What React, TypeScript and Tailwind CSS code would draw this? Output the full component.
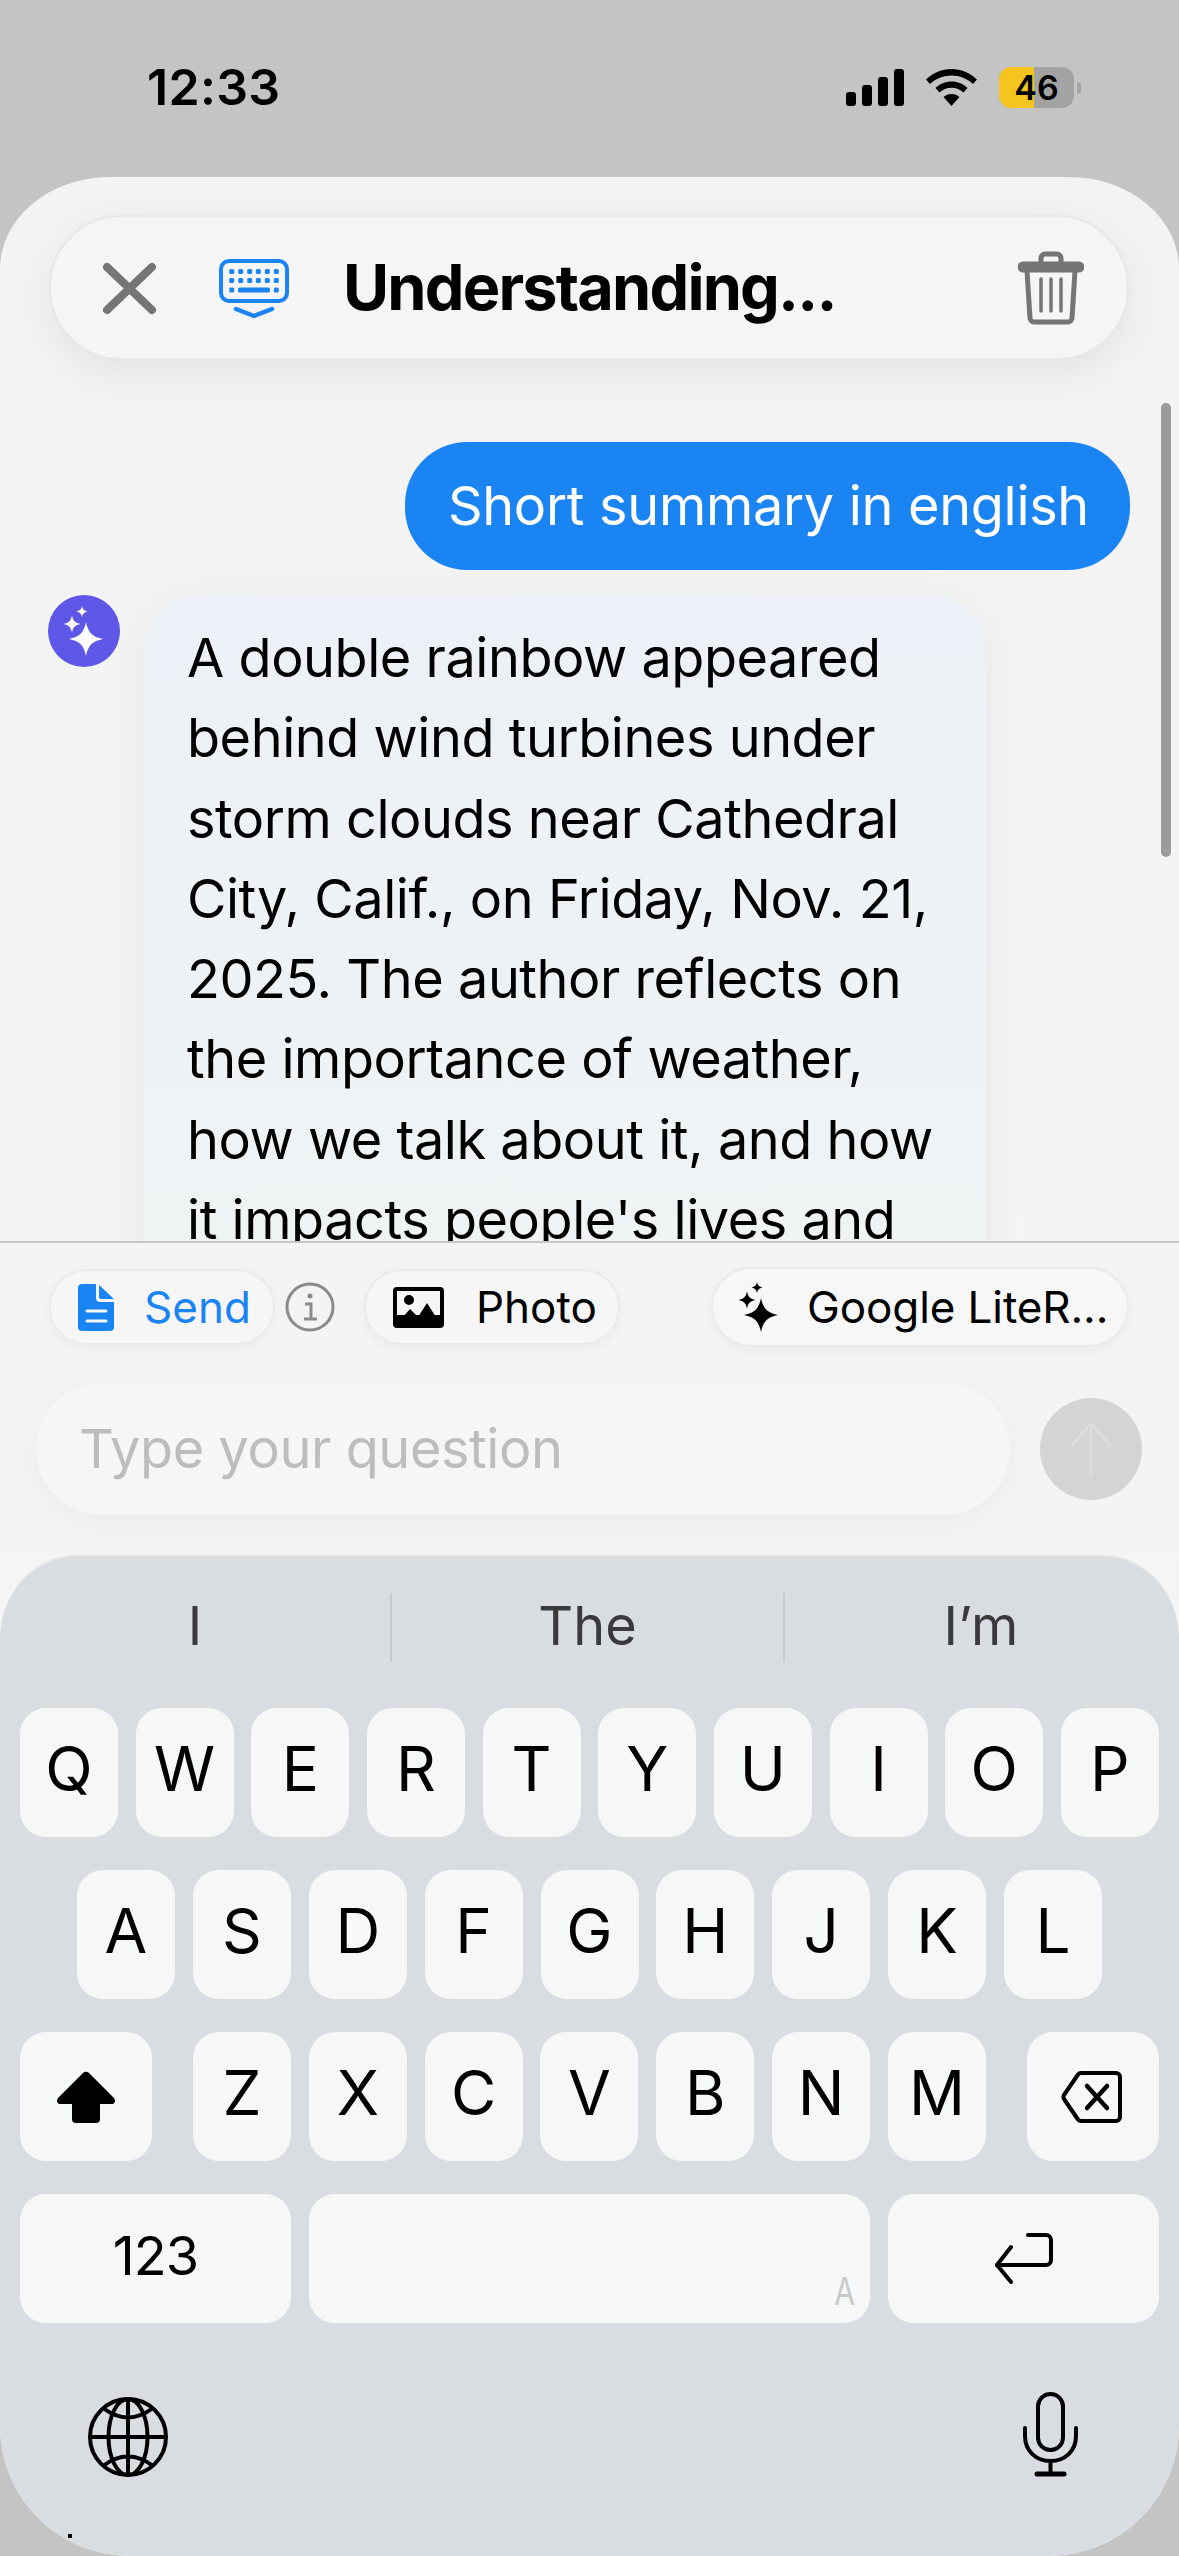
import React from 'react';

const SF = "font-['Inter','Liberation_Sans',sans-serif]";

const bodyLines = [
  'A double rainbow appeared',
  'behind wind turbines under',
  'storm clouds near Cathedral',
  'City, Calif., on Friday, Nov. 21,',
  '2025. The author reflects on',
  'the importance of weather,',
  'how we talk about it, and how',
  "it impacts people's lives and",
];

// four pointed star with concave sides
function star(x: number, y: number, r: number) {
  const a = r * 0.12;
  const b = r * 0.38;
  return `M${x} ${y - r}C${x + a} ${y - b} ${x + b} ${y - a} ${x + r} ${y}C${x + b} ${y + a} ${x + a} ${y + b} ${x} ${y + r}C${x - a} ${y + b} ${x - b} ${y + a} ${x - r} ${y}C${x - b} ${y - a} ${x - a} ${y - b} ${x} ${y - r}z`;
}

function Sparkles({ className, fill }: { className?: string; fill: string }) {
  return (
    <svg viewBox="0 0 42 50" className={className} fill={fill}>
      <path d={star(23, 33, 17)} />
      <path d={star(9, 18, 8.5)} />
      <path d={star(19, 5.5, 5.5)} />
    </svg>
  );
}

function Key({ label, className = 'w-[98px]', children }: { label?: string; className?: string; children?: React.ReactNode }) {
  return (
    <div className={`h-[129px] ${className} shrink-0 rounded-[26px] bg-[#f6f8f7] flex items-center justify-center text-black relative`}>
      {label && <span className="text-[62px] leading-none pb-[8px]">{label}</span>}
      {children}
    </div>
  );
}

function StatusBar() {
  return (
    <div className="h-[177px] shrink-0 flex items-start justify-between pl-[147px] pr-[98px] pt-[67px]">
      <span className="text-[50px] leading-[40px] font-semibold text-black tracking-[0.3px]">12:33</span>
      <div className="flex items-start gap-[22px]">
        <svg viewBox="0 0 58 37" className="w-[58px] h-[37px] mt-[2px]" fill="#000">
          <rect x="0" y="23" width="10" height="14" rx="3" />
          <rect x="16" y="16" width="10" height="21" rx="3" />
          <rect x="32" y="8" width="10" height="29" rx="3" />
          <rect x="48" y="0" width="10" height="37" rx="3" />
        </svg>
        <svg viewBox="0 0 51 37" className="w-[51px] h-[37px] mt-[2px]" fill="#000">
          <path d="M25.500 0C35 0 44 4 51 10.500l-4 4.500C41 9.500 33.500 6.500 25.500 6.500S10 9.500 4 15L0 10.500C7 4 16 0 25.500 0z" />
          <path d="M25.500 12.500c6 0 11.800 2.300 16 6.500l-4 4.500c-3.200-3-7.500-4.800-12-4.800s-8.800 1.800-12 4.800l-4-4.500c4.200-4.200 10-6.500 16-6.500z" />
          <path d="M25.500 25c3 0 5.800 1 8 3L25.500 37l-8-9c2.200-2 5-3 8-3z" />
        </svg>
        <div className="flex items-center gap-[3px]">
          <div className="relative w-[75px] h-[41px] rounded-[12px] overflow-hidden bg-[#a3a3a3] flex items-center justify-center">
            <div className="absolute left-0 top-0 bottom-0 w-[35px] bg-[#f5c51f]" />
            <span className="relative text-[34px] leading-none font-semibold text-black">46</span>
          </div>
          <div className="w-[4px] h-[12px] rounded-r-full bg-[#a3a3a3]" />
        </div>
      </div>
    </div>
  );
}

function Header() {
  return (
    <div className="ml-[49px] mr-[50px] mt-[38px] h-[145px] shrink-0 rounded-[72px] bg-[#f5f5f5] border-2 border-[#e7e7e7] shadow-[0_12px_40px_rgba(0,0,0,0.07)] flex items-center">
      <svg viewBox="0 0 55 53" className="ml-[51px] w-[55px] h-[53px] mt-[2px]" stroke="#757575" strokeWidth="8" strokeLinecap="round" fill="none">
        <path d="M5 5l45 43M50 5L5 48" />
      </svg>
      <svg viewBox="0 0 70 60" className="ml-[62px] w-[70px] h-[60px] mt-[2px]">
        <rect x="2" y="2" width="66" height="40" rx="8" fill="none" stroke="#1a84f2" strokeWidth="4" />
        <g fill="#1a84f2">
          {[10.2, 19.2, 28.2, 36.8, 45.8, 54.8].map((x) => (
            <React.Fragment key={x}>
              <rect x={x} y="10" width="5" height="5" rx="1.500" />
              <rect x={x} y="19" width="5" height="5" rx="1.500" />
            </React.Fragment>
          ))}
          <rect x="10.200" y="28.500" width="5" height="5" rx="1.500" />
          <rect x="19" y="28.500" width="32" height="5" rx="1.500" />
          <rect x="54.800" y="28.500" width="5" height="5" rx="1.500" />
        </g>
        <path d="M17 50l18 7 18-7" fill="none" stroke="#1a84f2" strokeWidth="4.500" strokeLinecap="round" strokeLinejoin="round" />
      </svg>
      <span className="ml-[54px] text-[63px] leading-none font-bold text-black whitespace-nowrap tracking-[-1.8px]">Understanding...</span>
      <svg viewBox="0 0 66 74" className="ml-auto mr-[43px] w-[66px] h-[74px]" fill="none" stroke="#757575" strokeWidth="5">
        <path d="M23 11V7a4 4 0 0 1 4-4h12a4 4 0 0 1 4 4v4" />
        <rect x="2" y="13" width="62" height="6" rx="3" fill="#757575" />
        <path d="M9 20l3 47a4 4 0 0 0 4 4h34a4 4 0 0 0 4-4l3-47" />
        <path d="M23 28v32M33 28v32M43 28v32" strokeLinecap="round" strokeWidth="3.500" />
      </svg>
    </div>
  );
}

function Chat() {
  return (
    <div className="relative h-[1064px] shrink-0 overflow-hidden flex flex-col">
      <Header />
      <div className="self-end shrink-0 mr-[49px] mt-[82px] h-[128px] rounded-[62px] bg-[#1a84f2] flex items-center pl-[43px] pr-[41px] text-[54px] tracking-[-0.3px] leading-none text-white whitespace-nowrap">
        Short summary in english
      </div>
      <div className="flex items-start shrink-0 gap-[23px] ml-[48px] mt-[25px]">
        <div className="w-[72px] h-[72px] shrink-0 rounded-full bg-[#5e57e8] flex items-center justify-center">
          <Sparkles className="w-[42px] h-[50px]" fill="#ffffff" />
        </div>
        <div className="w-[844px] h-[800px] shrink-0 rounded-t-[56px] bg-linear-to-b from-[#edf0f6] to-[#f1f4f4] border border-[#e8eff2] shadow-[0_8px_44px_rgba(0,0,0,0.06)] pl-[43px] pt-[22px]">
          {bodyLines.map((line) => (
            <div key={line} className="h-[80.3px] text-[54px] tracking-[-0.45px] leading-[80px] text-black whitespace-nowrap">{line}</div>
          ))}
        </div>
      </div>
      <div className="absolute left-[1161px] top-[226px] w-[10px] h-[454px] rounded-full bg-[#9b9b9b]" />
    </div>
  );
}

function Panel() {
  return (
    <div className="relative h-[314px] shrink-0 border-t-2 border-[#c6c6c6] bg-[#f4f4f4]">
      <div className="flex items-center pl-[49px] pr-[50px] pt-[24px] h-[104px]">
        <div className="h-[76px] w-[226px] rounded-[38px] bg-[#f6f6f6] border-2 border-[#ebebeb] shadow-[0_4px_14px_rgba(0,0,0,0.04)] flex items-center pl-[27px] gap-[30px]">
          <svg viewBox="0 0 36 47" className="w-[36px] h-[47px]">
            <path d="M4 0h14v14a4 4 0 0 0 4 4h14v25a4 4 0 0 1-4 4H4a4 4 0 0 1-4-4V4a4 4 0 0 1 4-4z" fill="#1a84f2" />
            <path d="M21 1l15 14H23a2 2 0 0 1-2-2z" fill="#1a84f2" />
            <path d="M9 27h19M9 37h19" stroke="#f6f6f6" strokeWidth="3" strokeLinecap="round" />
          </svg>
          <span className="text-[44px] leading-none text-[#1a84f2]">Send</span>
        </div>
        <svg viewBox="0 0 50 50" className="ml-[10px] w-[50px] h-[50px]" fill="none" stroke="#8a8a8a">
          <circle cx="25" cy="25" r="23" strokeWidth="3" />
          <circle cx="25" cy="14" r="2.500" fill="#8a8a8a" stroke="none" />
          <path d="M20 22h6v14M19 37h13" strokeWidth="3" />
        </svg>
        <div className="ml-[29px] h-[76px] w-[256px] rounded-[38px] bg-[#f6f6f6] border-2 border-[#ebebeb] shadow-[0_4px_14px_rgba(0,0,0,0.04)] flex items-center pl-[27px] gap-[32px]">
          <svg viewBox="0 0 51 41" className="w-[51px] h-[41px]">
            <rect x="0" y="0" width="51" height="41" rx="4" fill="#000" />
            <rect x="4" y="4" width="43" height="24" fill="#f6f6f6" />
            <circle cx="16" cy="13" r="5" fill="#000" />
            <path d="M3 38l14-16 8 8 9-14 14 22z" fill="#000" />
          </svg>
          <span className="text-[44px] leading-none text-black">Photo</span>
        </div>
        <div className="ml-auto h-[80px] w-[418px] rounded-[40px] bg-[#f7f7f7] border-2 border-[#ebebeb] shadow-[0_4px_14px_rgba(0,0,0,0.04)] flex items-center pl-[25px] gap-[27px]">
          <Sparkles className="w-[42px] h-[50px]" fill="#000000" />
          <span className="text-[44px] leading-none text-black whitespace-nowrap tracking-[-0.1px]">Google LiteR...</span>
        </div>
      </div>
      <div className="flex items-center pl-[36px] pt-[36px]">
        <div className="w-[974px] h-[132px] rounded-[66px] bg-[#f6f6f6] shadow-[0_8px_30px_rgba(0,0,0,0.04)] flex items-center pl-[43px] text-[54px] tracking-[-0.4px] leading-none text-[#bdbdbd]">
          Type your question
        </div>
        <div className="ml-[30px] w-[102px] h-[102px] rounded-full bg-[#d4d4d4] flex items-center justify-center">
          <svg viewBox="0 0 44 54" className="w-[44px] h-[54px]" fill="none" stroke="#dcdcdc" strokeWidth="3">
            <path d="M22 54V2M2 24L22 2l20 22" />
          </svg>
        </div>
      </div>
    </div>
  );
}

function Keyboard() {
  return (
    <div className="h-[1001px] rounded-[76px_76px_130px_130px/84px_84px_130px_130px] bg-[#d9dce0] border-t-2 border-[#e4e5e7]">
      <div className="flex items-center h-[69px] mt-[36px] text-[54px] leading-none text-[#3a3a3c]">
        <div className="w-[392px] h-full flex items-center justify-center border-r-2 border-[#c8cacd] pb-[4px]">I</div>
        <div className="w-[393px] h-full flex items-center justify-center border-r-2 border-[#c8cacd] pb-[4px]">The</div>
        <div className="w-[392px] h-full flex items-center justify-center pb-[4px]">I’m</div>
      </div>
      <div className="flex flex-col gap-[33px] mt-[46px]">
        <div className="flex justify-between px-[20px]">
          {'QWERTYUIOP'.split('').map((k) => <Key key={k} label={k} />)}
        </div>
        <div className="flex justify-between px-[77px]">
          {'ASDFGHJKL'.split('').map((k) => <Key key={k} label={k} />)}
        </div>
        <div className="flex justify-between px-[20px]">
          <Key className="w-[132px]">
            <svg viewBox="0 0 60 52" className="w-[60px] h-[52px]" fill="#000">
              <path d="M27 2a4 4 0 0 1 6 0l25 25c2 3 1 6-3 6H44v15a4 4 0 0 1-4 4H20a4 4 0 0 1-4-4V33H5c-4 0-5-3-3-6z" />
            </svg>
          </Key>
          <div className="w-[793px] flex justify-between">
            {'ZXCVBNM'.split('').map((k) => <Key key={k} label={k} />)}
          </div>
          <Key className="w-[132px]">
            <svg viewBox="0 0 61 52" className="w-[61px] h-[52px] mr-[3px]" fill="none" stroke="#000" strokeWidth="4" strokeLinecap="round" strokeLinejoin="round">
              <path d="M20 2h35a4 4 0 0 1 4 4v40a4 4 0 0 1-4 4H20a4 4 0 0 1-3-1.500L3 28a4 4 0 0 1 0-4L17 3.500A4 4 0 0 1 20 2z" />
              <path d="M26 15l20 22M46 15L26 37" strokeWidth="4.500" />
            </svg>
          </Key>
        </div>
        <div className="flex justify-between px-[20px]">
          <Key className="w-[271px]">
            <span className="text-[54px] tracking-[-1px] leading-none pb-[6px]">123</span>
          </Key>
          <Key className="w-[561px]">
            <span className="absolute right-[15px] bottom-[17px] text-[30px] leading-[30px] text-[#c8c8c8] scale-y-125">A</span>
          </Key>
          <Key className="w-[271px]">
            <svg viewBox="0 0 59 51" className="w-[59px] h-[51px]" fill="none" stroke="#000" strokeWidth="4" strokeLinecap="round" strokeLinejoin="round">
              <path d="M34 2h18a5 5 0 0 1 5 5v20a5 5 0 0 1-5 5H3" />
              <path d="M17 14L3 32l14 17" />
            </svg>
          </Key>
        </div>
      </div>
      <div className="flex justify-between pl-[88px] pr-[101px] mt-[69px]">
        <svg viewBox="0 0 80 80" className="w-[80px] h-[80px] mt-[5px]" fill="none" stroke="#000" strokeWidth="4">
          <circle cx="40" cy="40" r="38" />
          <ellipse cx="40" cy="40" rx="19.500" ry="38" />
          <path d="M40 2v76M2 40h76M15 11Q40 30 65 11M15 69Q40 50 65 69" />
        </svg>
        <svg viewBox="0 0 55 85" className="w-[55px] h-[85px]" fill="none" stroke="#000" strokeWidth="4" strokeLinecap="round">
          <rect x="15" y="2" width="25" height="56" rx="12.500" />
          <path d="M2 36v8c0 15 11 25 25.500 25S53 59 53 44v-8M27.500 69v13" />
          <path d="M14 82h27" strokeWidth="5" />
        </svg>
      </div>
    </div>
  );
}

export default function App() {
  return (
    <div className={`${SF} relative w-[1179px] h-[2556px] bg-[#c4c4c4] flex flex-col overflow-hidden`}>
      <StatusBar />
      <div className="flex-1 rounded-[110px_110px_130px_130px/92px_92px_130px_130px] bg-linear-to-b from-[#f3f3f3] to-[#f5f6f6] overflow-hidden flex flex-col">
        <Chat />
        <Panel />
        <Keyboard />
      </div>
      <div className="absolute left-[68px] top-[2534px] w-[4px] h-[4px] bg-black" />
    </div>
  );
}
